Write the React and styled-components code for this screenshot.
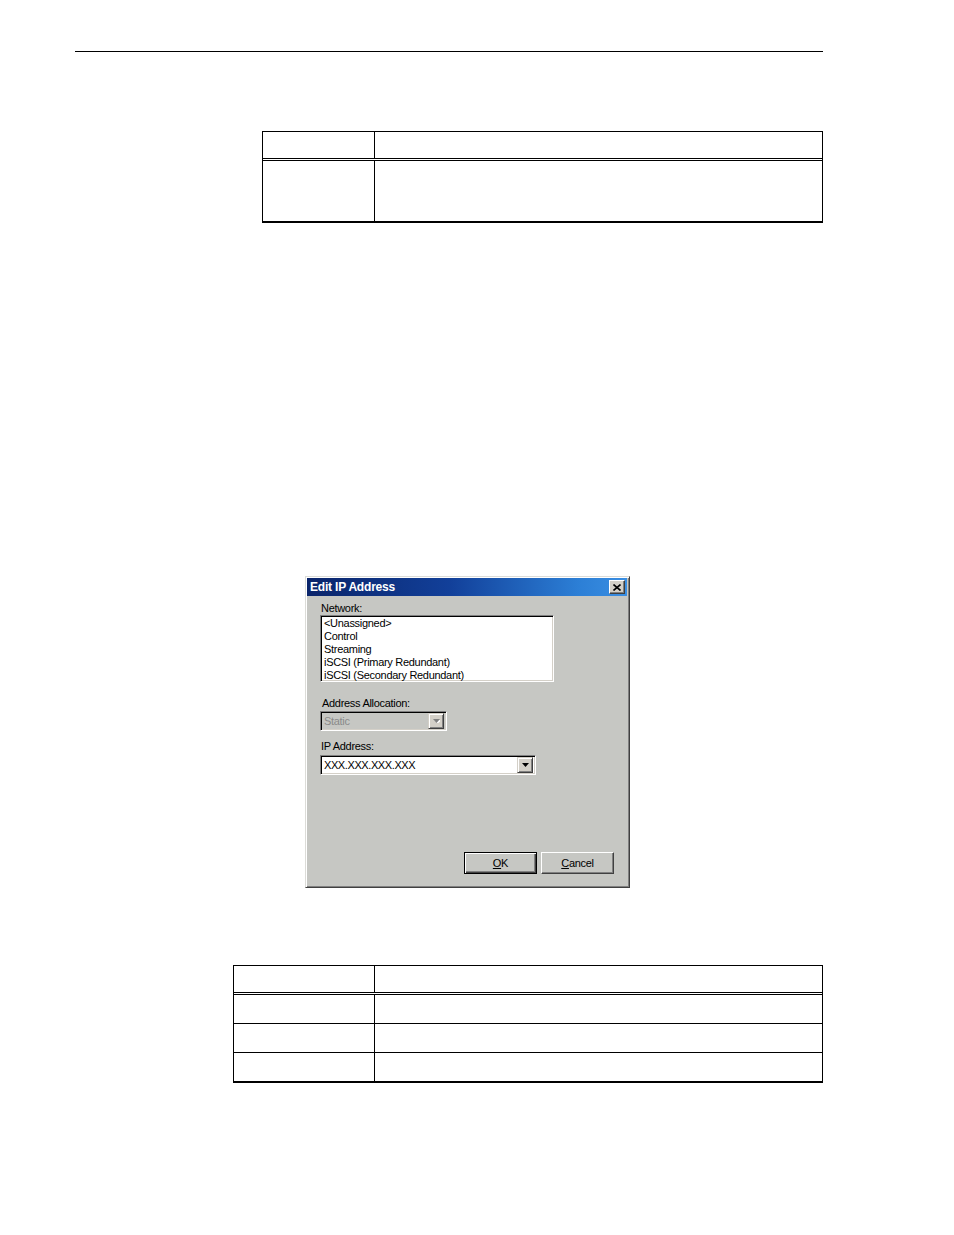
import React from "react";
import styled, { createGlobalStyle } from "styled-components";

const Global = createGlobalStyle`
  html, body { margin: 0; padding: 0; background: #fff; }
  body { font-family: "Liberation Sans", Arial, sans-serif; }
`;

const Page = styled.div`
  width: 954px;
  height: 1235px;
  display: flex;
  flex-direction: column;
  align-items: flex-start;
  box-sizing: border-box;
  padding-top: 51px;
`;

const Rule = styled.div`
  margin-left: 75px;
  width: 748px;
  height: 1px;
  background: #000;
`;

const Table = styled.div`
  margin-left: ${(p) => p.$left}px;
  margin-top: ${(p) => p.$top}px;
  width: ${(p) => p.$width}px;
  border-top: 1px solid #000;
  border-left: 1px solid #000;
  border-right: 1px solid #000;
  border-bottom: 2px solid #000;
  box-sizing: border-box;
`;

const Row = styled.div`
  display: grid;
  grid-template-columns: ${(p) => p.$first}px 1fr;
  height: ${(p) => p.$h}px;
  box-sizing: border-box;
  border-bottom: ${(p) => (p.$head ? "3px double #000" : p.$last ? "none" : "1px solid #000")};
`;

const Cell = styled.div`
  border-right: ${(p) => (p.$divider ? "1px solid #000" : "none")};
`;

const Dialog = styled.div`
  margin-left: 305px;
  margin-top: 353px;
  width: 325px;
  height: 312px;
  box-sizing: border-box;
  background: #c6c7c3;
  border: 1px solid;
  border-color: #dcdcd8 #404040 #404040 #dcdcd8;
  box-shadow: inset 1px 1px 0 #ffffff, inset -1px -1px 0 #808080;
  padding: 1px 2px 2px 1px;
  display: flex;
  flex-direction: column;
  font-family: "Liberation Sans", Arial, sans-serif;
  font-size: 11px;
  color: #000;
`;

const TitleBar = styled.div`
  height: 18px;
  background: linear-gradient(to right, #0a246a 0%, #12409a 45%, #2c7fd6 85%, #3a8ee2 100%);
  display: flex;
  align-items: center;
  justify-content: space-between;
  padding: 0 2px 0 3px;
`;

const Title = styled.span`
  color: #fff;
  font-weight: bold;
  font-size: 12px;
  letter-spacing: -0.2px;
`;

const CloseBtn = styled.div`
  width: 16px;
  height: 14px;
  box-sizing: border-box;
  background: #d4d0c8;
  border: 1px solid;
  border-color: #fff #404040 #404040 #fff;
  box-shadow: inset -1px -1px 0 #808080;
  display: flex;
  align-items: center;
  justify-content: center;
`;

const Body = styled.div`
  flex: 1;
  display: flex;
  flex-direction: column;
  padding: 6px 13px 11px 13px;
`;

const Label = styled.div`
  line-height: 13px;
  height: 13px;
  margin-top: ${(p) => p.$mt || 0}px;
  margin-left: ${(p) => p.$ml || 0}px;
  letter-spacing: -0.3px;
`;

const ListBox = styled.div`
  width: 234px;
  height: 67px;
  box-sizing: border-box;
  background: #fff;
  border: 1px solid;
  border-color: #808080 #ffffff #ffffff #808080;
  box-shadow: inset 1px 1px 0 #000, inset -1px -1px 0 #d4d0c8;
  padding: 1px 2px;
`;

const Item = styled.div`
  line-height: 13px;
  height: 13px;
  padding-left: ${(p) => p.$pl || 1}px;
  letter-spacing: -0.3px;
  white-space: nowrap;
`;

const Combo = styled.div`
  width: ${(p) => p.$w}px;
  height: 20px;
  margin-top: ${(p) => p.$mt || 0}px;
  box-sizing: border-box;
  background: ${(p) => (p.$disabled ? "#c6c7c3" : "#fff")};
  border: 1px solid;
  border-color: #808080 #ffffff #ffffff #808080;
  box-shadow: inset 1px 1px 0 #000, inset -1px -1px 0 #d4d0c8;
  display: flex;
  align-items: center;
  padding: 2px 2px 2px 3px;
`;

const ComboText = styled.span`
  flex: 1;
  color: ${(p) => (p.$disabled ? "#8a8a8a" : "#000")};
  letter-spacing: ${(p) => (p.$tight ? "-0.4px" : "-0.3px")};
  white-space: nowrap;
`;

const DropBtn = styled.div`
  width: 16px;
  height: 16px;
  box-sizing: border-box;
  background: #d4d0c8;
  border: 1px solid;
  border-color: #d4d0c8 #404040 #404040 #d4d0c8;
  box-shadow: inset 1px 1px 0 #fff, inset -1px -1px 0 #808080;
  display: flex;
  align-items: center;
  justify-content: center;
`;

const Buttons = styled.div`
  margin-top: auto;
  display: flex;
  justify-content: flex-end;
  gap: 4px;
`;

const Button = styled.div`
  width: 73px;
  height: 22px;
  box-sizing: border-box;
  background: #c6c7c3;
  border: 1px solid;
  border-color: ${(p) => (p.$default ? "#000" : "#fff #404040 #404040 #fff")};
  box-shadow: ${(p) =>
    p.$default
      ? "inset 1px 1px 0 #fff, inset -1px -1px 0 #404040, inset -2px -2px 0 #808080"
      : "inset -1px -1px 0 #808080"};
  display: flex;
  align-items: center;
  justify-content: center;
  font-size: 11px;
  letter-spacing: -0.3px;
  u { text-decoration: underline; text-underline-offset: 1px; }
`;

const Arrow = ({ disabled }) => (
  <svg width="7" height="4" viewBox="0 0 7 4">
    {disabled && <path d="M1 1h7L4.5 5z" fill="#fff" />}
    <path d="M0 0h7L3.5 4z" fill={disabled ? "#808080" : "#000"} />
  </svg>
);

const DocTable = ({ left, top, width, first, rows }) => (
  <Table $left={left} $top={top} $width={width}>
    {rows.map((h, i) => (
      <Row key={i} $first={first} $h={h} $head={i === 0} $last={i === rows.length - 1}>
        <Cell $divider />
        <Cell />
      </Row>
    ))}
  </Table>
);

export default function App() {
  return (
    <>
      <Global />
      <Page>
        <Rule />
        <DocTable left={262} top={79} width={561} first={112} rows={[29, 60]} />
        <Dialog>
          <TitleBar>
            <Title>Edit IP Address</Title>
            <CloseBtn>
              <svg width="8" height="7" viewBox="0 0 8 7">
                <path d="M0.5 0.5L7.5 6.5M7.5 0.5L0.5 6.5" stroke="#000" strokeWidth="1.6" />
              </svg>
            </CloseBtn>
          </TitleBar>
          <Body>
            <Label $ml={1}>Network:</Label>
            <ListBox>
              <Item>&lt;Unassigned&gt;</Item>
              <Item>Control</Item>
              <Item>Streaming</Item>
              <Item $pl={0}>iSCSI (Primary Redundant)</Item>
              <Item $pl={0}>iSCSI (Secondary Redundant)</Item>
            </ListBox>
            <Label $mt={15} $ml={2}>Address Allocation:</Label>
            <Combo $w={127} $mt={1} $disabled>
              <ComboText $disabled>Static</ComboText>
              <DropBtn>
                <Arrow disabled />
              </DropBtn>
            </Combo>
            <Label $mt={9} $ml={1}>IP Address:</Label>
            <Combo $w={216} $mt={2}>
              <ComboText $tight>XXX.XXX.XXX.XXX</ComboText>
              <DropBtn>
                <Arrow />
              </DropBtn>
            </Combo>
            <Buttons>
              <Button $default>
                <span><u>O</u>K</span>
              </Button>
              <Button>
                <span><u>C</u>ancel</span>
              </Button>
            </Buttons>
          </Body>
        </Dialog>
        <DocTable left={233} top={77} width={590} first={141} rows={[29, 29, 29, 28]} />
      </Page>
    </>
  );
}
